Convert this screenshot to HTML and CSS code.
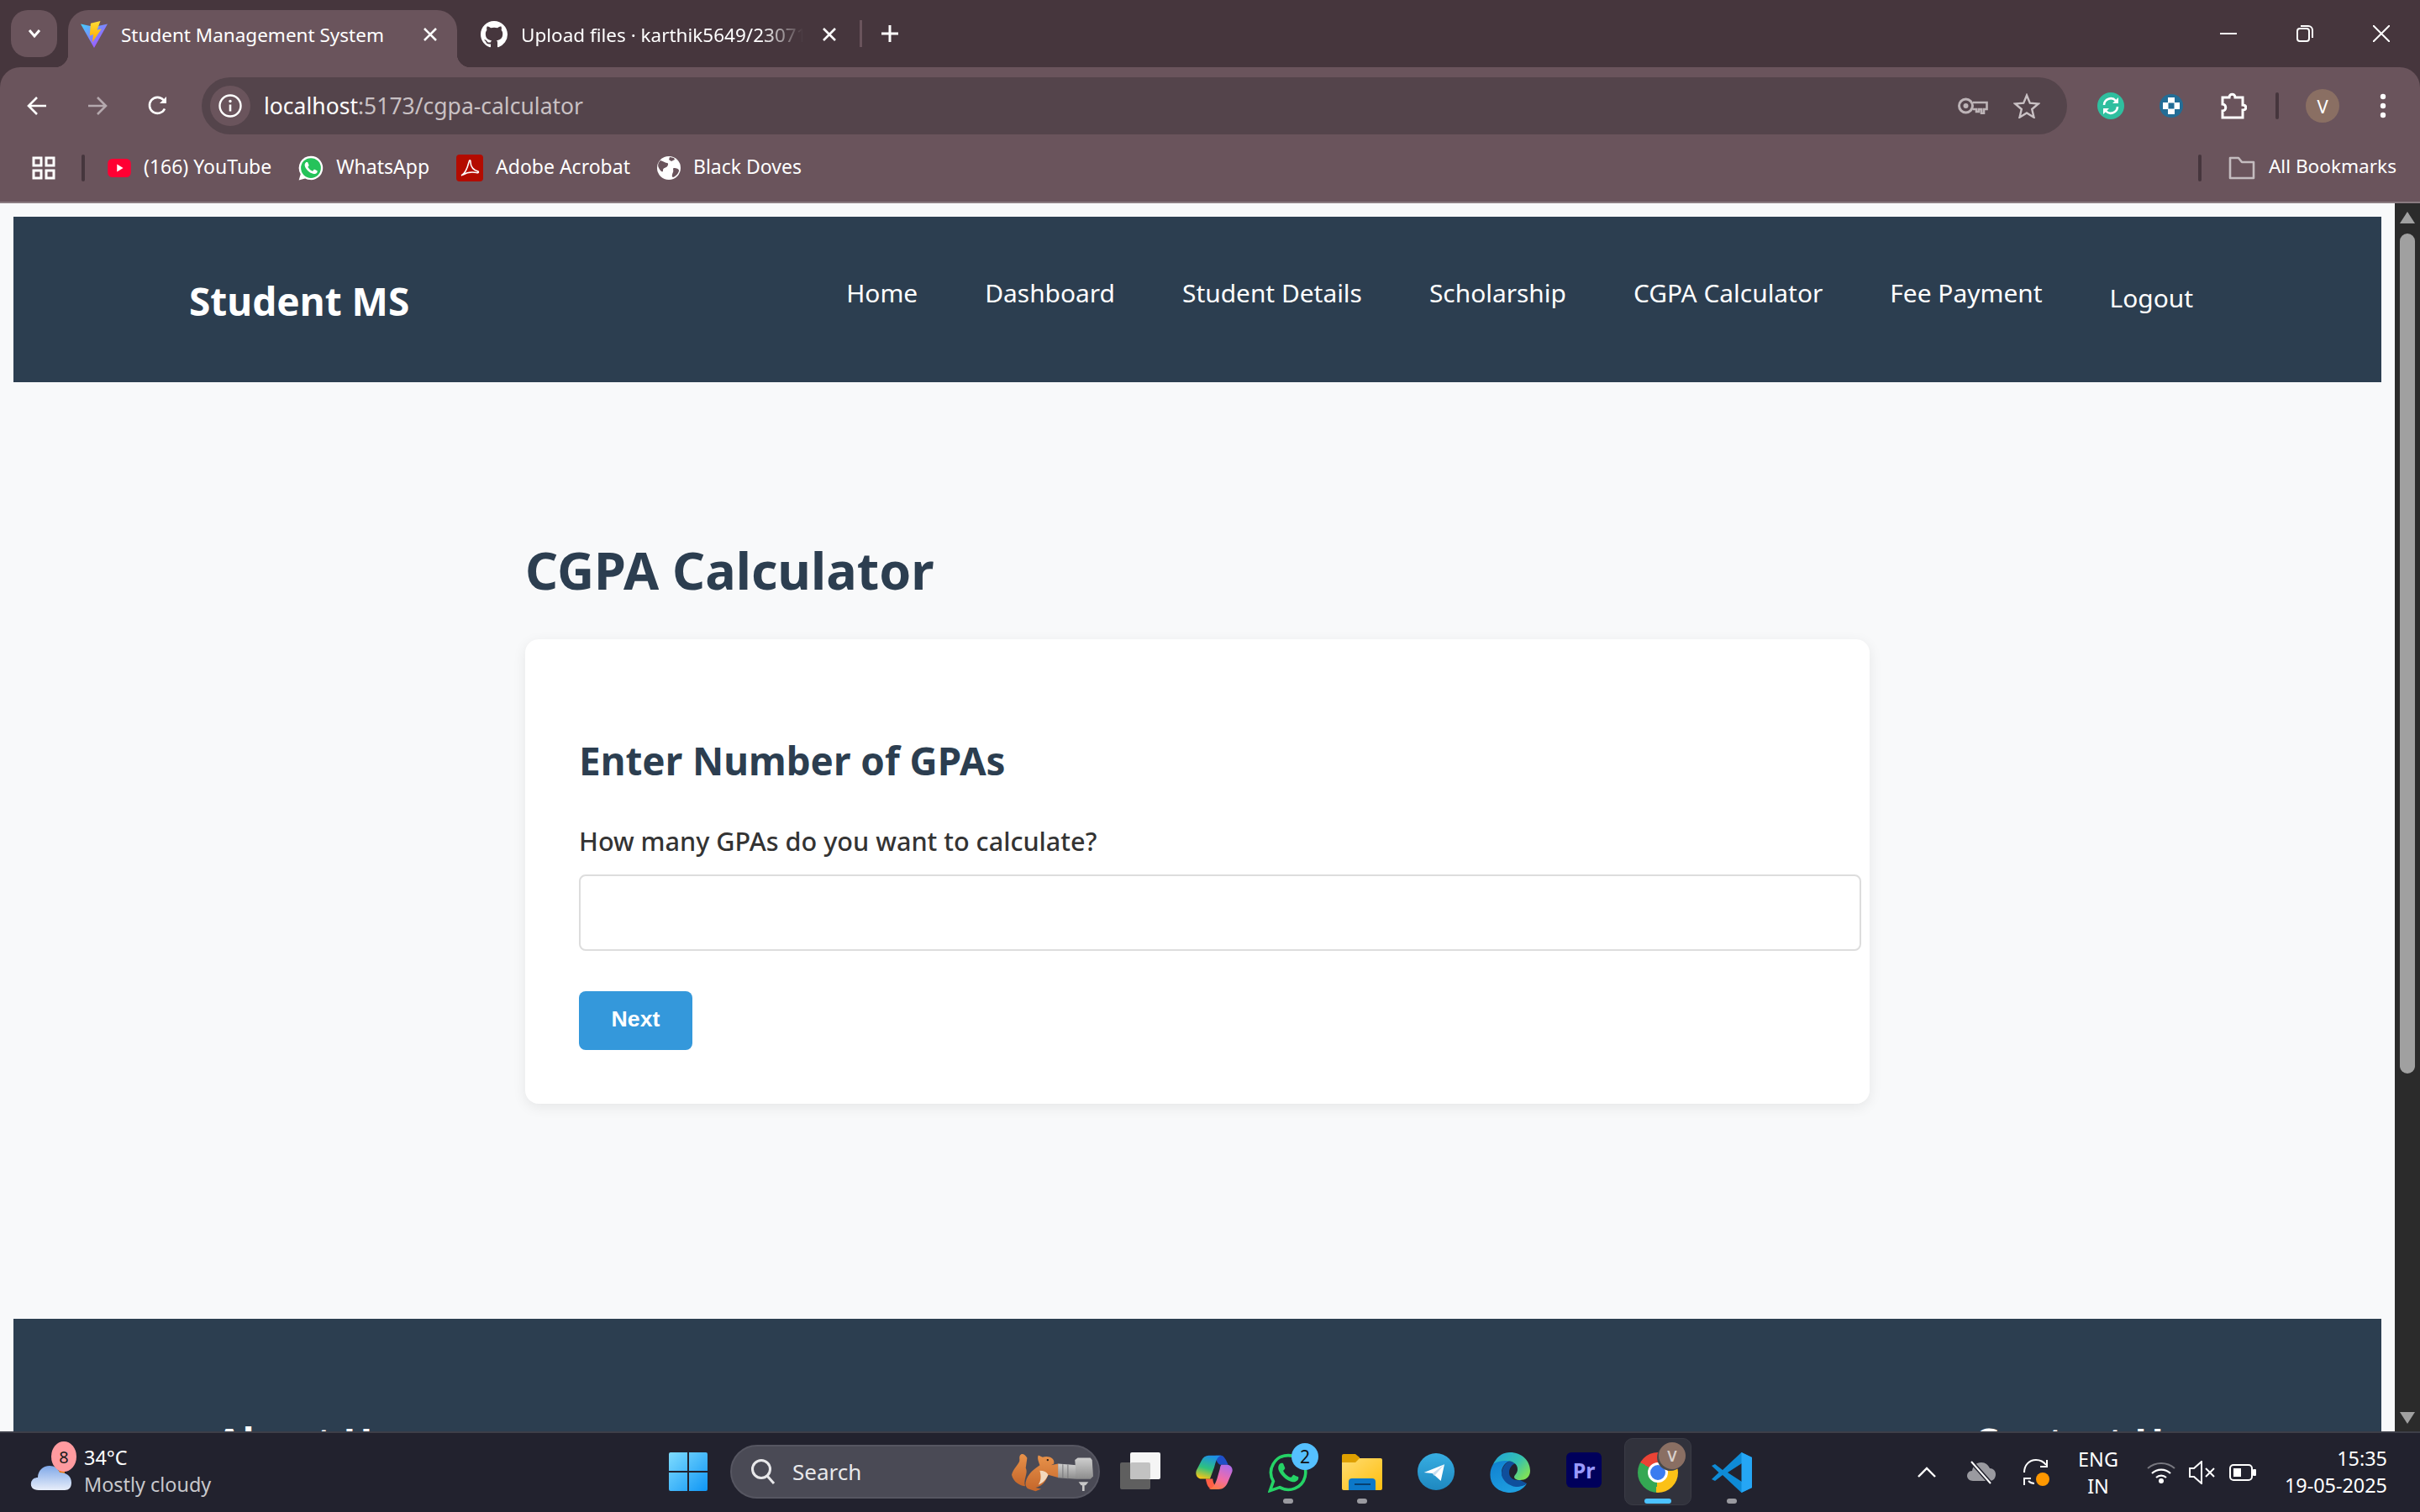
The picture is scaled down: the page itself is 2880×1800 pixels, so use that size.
FILE: index.html
```html
<!DOCTYPE html>
<html lang="en">
<head>
    <meta charset="UTF-8">
    <title>Student Management System</title>
    <link rel="stylesheet" href="styles.css">
</head>
<body>
<div class="screen">

    <!-- browser tabs -->
    <div class="tabstrip">
        <div class="tab-search">
            <svg width="16" height="12" viewBox="0 0 16 12"><path d="M2 2l6 7 6-7" fill="none" stroke="#fff" stroke-width="3"/></svg>
        </div>
        <div class="tab tab-active">
            <svg class="tab-icon" width="32" height="32" viewBox="0 0 32 32">
                <defs>
                    <linearGradient id="vite" x1="0" y1="0" x2="1" y2="1"><stop offset="0" stop-color="#41d1ff"/><stop offset="1" stop-color="#bd34fe"/></linearGradient>
                    <linearGradient id="bolt" x1="0" y1="0" x2="0" y2="1"><stop offset="0" stop-color="#ffdd35"/><stop offset="1" stop-color="#ffa800"/></linearGradient>
                </defs>
                <path d="M0 3.500L16 7l16-3.500L16 32z" fill="url(#vite)"/>
                <path d="M23.500 0L12 2.700 10.700 17.500 15 16l-1 9.300L24.700 9.500l-5.200 1.300z" fill="url(#bolt)"/>
            </svg>
            <span class="tab-title">Student Management System</span>
            <svg class="tab-close" width="18" height="18" viewBox="0 0 18 18"><path d="M2 2l14 14M16 2L2 16" stroke="#fff" stroke-width="2.6"/></svg>
        </div>
        <div class="tab tab-other">
            <svg class="tab-icon" width="32" height="32" viewBox="0 0 16 16"><path fill="#fff" d="M8 0C3.58 0 0 3.58 0 8c0 3.54 2.29 6.53 5.47 7.59.4.07.55-.17.55-.38 0-.19-.01-.82-.01-1.49-2.01.37-2.53-.49-2.69-.94-.09-.23-.48-.94-.82-1.13-.28-.15-.68-.52-.01-.53.63-.01 1.08.58 1.23.82.72 1.21 1.87.87 2.33.66.07-.52.28-.87.51-1.07-1.78-.2-3.64-.89-3.64-3.95 0-.87.31-1.59.82-2.15-.08-.2-.36-1.02.08-2.12 0 0 .67-.21 2.2.82.64-.18 1.32-.27 2-.27.68 0 1.36.09 2 .27 1.53-1.04 2.2-.82 2.2-.82.44 1.1.16 1.92.08 2.12.51.56.82 1.27.82 2.15 0 3.07-1.87 3.75-3.65 3.95.29.25.54.73.54 1.48 0 1.07-.01 1.93-.01 2.2 0 .21.15.46.55.38A8.013 8.013 0 0016 8c0-4.42-3.58-8-8-8z"/></svg>
            <span class="tab-title tab-fade">Upload files · karthik5649/23071</span>
            <svg class="tab-close" width="18" height="18" viewBox="0 0 18 18"><path d="M2 2l14 14M16 2L2 16" stroke="#fff" stroke-width="2.6"/></svg>
        </div>
        <div class="tab-sep"></div>
        <svg class="new-tab" width="22" height="22" viewBox="0 0 22 22"><path d="M11 1v20M1 11h20" stroke="#fff" stroke-width="3"/></svg>
        <div class="win-controls">
            <svg width="20" height="20" viewBox="0 0 20 20"><path d="M0 10h20" stroke="#fff" stroke-width="2"/></svg>
            <svg width="20" height="20" viewBox="0 0 20 20"><rect x="1" y="4" width="14" height="15" rx="3" fill="none" stroke="#fff" stroke-width="2"/><path d="M5 1h9a5 5 0 015 5v9" fill="none" stroke="#fff" stroke-width="2"/></svg>
            <svg width="20" height="20" viewBox="0 0 20 20"><path d="M0 0l20 20M20 0L0 20" stroke="#fff" stroke-width="2"/></svg>
        </div>
    </div>

    <!-- address bar -->
    <div class="toolbar">
        <svg class="nav-btn" width="24" height="24" viewBox="0 0 24 24"><path d="M23 12H3M12 2L2 12l10 10" fill="none" stroke="#fff" stroke-width="2.6"/></svg>
        <svg class="nav-btn" width="24" height="24" viewBox="0 0 24 24"><path d="M1 12h20M12 2l10 10-10 10" fill="none" stroke="#b5a9ae" stroke-width="2.6"/></svg>
        <svg class="nav-btn" width="24" height="24" viewBox="0 0 24 24"><path d="M20 15.5A9.5 9.5 0 1 1 18.5 5L21 7.5" fill="none" stroke="#fff" stroke-width="2.6"/><path d="M22 1v8h-8z" fill="#fff"/></svg>
        <div class="omnibox">
            <div class="site-info">
                <svg width="28" height="28" viewBox="0 0 28 28"><circle cx="14" cy="14" r="12.5" fill="none" stroke="#fff" stroke-width="2.4"/><path d="M14 12.5v8" stroke="#fff" stroke-width="2.6"/><circle cx="14" cy="8.5" r="1.7" fill="#fff"/></svg>
            </div>
            <span class="url">localhost<span class="url-dim">:5173/cgpa-calculator</span></span>
            <svg class="omni-key" width="36" height="20" viewBox="0 0 36 20"><circle cx="9.500" cy="10" r="8" fill="none" stroke="#bdb4b7" stroke-width="3"/><circle cx="9.500" cy="10" r="3" fill="#bdb4b7"/><path d="M18 6h16.500v8H31v5h-3v-5h-3v3h-3v-3h-4" fill="none" stroke="#bdb4b7" stroke-width="2.600"/></svg>
            <svg width="32" height="30" viewBox="0 0 32 30"><path d="M16 2.5l3.8 9.2 10 .8-7.6 6.5 2.3 9.7L16 23.5l-8.500 5.200 2.300-9.700-7.600-6.500 10-.8z" fill="none" stroke="#c9c1c4" stroke-width="2.400"/></svg>
        </div>
        <div class="ext-icons">
            <svg width="32" height="32" viewBox="0 0 32 32"><circle cx="16" cy="16" r="16" fill="#2fbf9f"/><path d="M8 15a8 8 0 0 1 14-5M24 17a8 8 0 0 1-14 5" fill="none" stroke="#fff" stroke-width="2.600"/><path d="M25 6v7h-7zM7 26v-7h7z" fill="#fff"/></svg>
            <svg class="ext-blue" width="28" height="28" viewBox="0 0 28 28"><circle cx="14" cy="14" r="14" fill="#236d96"/><path d="M10 4h8v6h6v8h-6v6h-8v-6H4v-8h6z" fill="#fff"/><rect x="10.500" y="10.500" width="7" height="7" fill="#236d96"/></svg>
            <svg class="ext-puzzle" width="32" height="32" viewBox="0 0 32 32"><path d="M3 6h8c0-5 7-5 7 0h9v9c5 0 5 6 0 6v9H3v-8c5 0 5-8 0-8z" fill="none" stroke="#fff" stroke-width="3"/></svg>
            <div class="toolbar-sep"></div>
            <div class="avatar">V</div>
            <svg class="kebab" width="8" height="30" viewBox="0 0 8 30"><circle cx="4" cy="4" r="3.200" fill="#fff"/><circle cx="4" cy="15" r="3.200" fill="#fff"/><circle cx="4" cy="26" r="3.200" fill="#fff"/></svg>
        </div>
    </div>

    <!-- bookmarks -->
    <div class="bookmarks">
        <svg class="apps" width="28" height="28" viewBox="0 0 28 28"><g fill="none" stroke="#fff" stroke-width="3"><rect x="2" y="2" width="9" height="9"/><rect x="17" y="2" width="9" height="9"/><rect x="2" y="17" width="9" height="9"/><rect x="17" y="17" width="9" height="9"/></g></svg>
        <div class="bm-sep"></div>
        <div class="bm">
            <svg width="28" height="22" viewBox="0 0 30 24"><rect width="30" height="24" rx="6" fill="#ff0033"/><path d="M12 7l8 5-8 5z" fill="#fff"/></svg>
            <span>(166) YouTube</span>
        </div>
        <div class="bm">
            <svg width="30" height="30" viewBox="0 0 24 24"><path d="M12 .5A11.400 11.400 0 0 0 2.200 17.700L.5 23.500l6-1.600A11.400 11.400 0 1 0 12 .5z" fill="#fff"/><circle cx="12" cy="12" r="9.500" fill="#25c35a"/><path fill="#fff" d="M17.500 14.400c-.3-.15-1.750-.86-2-.96-.27-.1-.46-.15-.66.15-.2.3-.76.96-.93 1.150-.17.2-.34.22-.64.07-.3-.15-1.260-.46-2.400-1.480-.89-.79-1.490-1.770-1.660-2.070-.17-.3-.02-.46.13-.6.13-.14.3-.35.45-.52.15-.17.2-.3.3-.5.1-.2.05-.37-.02-.52-.07-.15-.66-1.600-.9-2.200-.24-.57-.49-.5-.67-.5h-.57c-.2 0-.52.07-.79.37-.27.3-1.040 1.020-1.040 2.480s1.060 2.880 1.210 3.070c.15.2 2.100 3.200 5.080 4.490.71.3 1.260.49 1.690.62.71.23 1.360.2 1.870.12.57-.08 1.750-.71 2-1.400.25-.69.25-1.280.17-1.400-.07-.13-.27-.2-.57-.35z"/></svg>
            <span>WhatsApp</span>
        </div>
        <div class="bm">
            <svg width="32" height="32" viewBox="0 0 32 32"><rect width="32" height="32" rx="4" fill="#b30b00"/><path d="M6 25c4-2 7-8 9-16 .5-3 2-3 2 0 0 6 4 10 9 11 1 1 0 2-2 1.500-6-1-12 0-16 2.500" fill="none" stroke="#fff" stroke-width="1.600"/></svg>
            <span>Adobe Acrobat</span>
        </div>
        <div class="bm">
            <svg width="28" height="28" viewBox="0 0 28 28"><circle cx="14" cy="14" r="14" fill="#fff"/><path d="M4 5c4 1 6 3 8 3s1 4-1 5-4 1-4 4-3 1-5-3 0-7 2-9zM20 14c3 0 6 1 6 3s-3 7-7 8c-2 0-1-4 0-6s-1-5 1-5zM15 1l5 1 1 2-4 2-3-2z" fill="#6a545c"/></svg>
            <span>Black Doves</span>
        </div>
        <div class="bm-right">
            <div class="bm-sep"></div>
            <svg class="folder" width="32" height="28" viewBox="0 0 32 28"><path d="M2 2h10l4 5h14v19H2z" fill="none" stroke="#c4bcbf" stroke-width="2.600" stroke-linejoin="round"/></svg>
            <span>All Bookmarks</span>
        </div>
    </div>

    <!-- page area -->
    <div class="viewport">
        <div class="page">
            <nav class="navbar">
                <div class="nav-inner">
                    <div class="logo">Student MS</div>
                    <ul class="nav-links">
                        <li>Home</li>
                        <li>Dashboard</li>
                        <li>Student Details</li>
                        <li>Scholarship</li>
                        <li>CGPA Calculator</li>
                        <li>Fee Payment</li>
                        <li class="logout">Logout</li>
                    </ul>
                </div>
            </nav>

            <main class="content">
                <h1>CGPA Calculator</h1>
                <form class="card">
                    <h2>Enter Number of GPAs</h2>
                    <label for="gpaCount">How many GPAs do you want to calculate?</label>
                    <input type="number" id="gpaCount">
                    <button type="button">Next</button>
                </form>
            </main>

            <footer class="footer">
                <div class="footer-inner">
                    <h3>About Us</h3>
                    <h3>Contact Us</h3>
                </div>
            </footer>
        </div>
        <div class="scrollbar">
            <div class="arrow-up"></div>
            <div class="thumb"></div>
            <div class="arrow-down"></div>
        </div>
    </div>

    <!-- windows taskbar -->
    <div class="taskbar">
        <div class="weather">
            <div class="weather-icon">
                <svg width="50" height="34" viewBox="0 0 50 34">
                    <defs><linearGradient id="cloud" x1="0" y1="0" x2="0" y2="1"><stop offset="0" stop-color="#7fa8e8"/><stop offset="1" stop-color="#e8eefa"/></linearGradient></defs>
                    <path d="M34 2h7v14h-7z" fill="#e8760c"/>
                    <path d="M10 33C3 33 0 29 1 24c1-4 4-6 8-6 0-8 6-14 14-14 6 0 10 3 12 8 8 0 14 4 14 12 0 6-3 9-8 9z" fill="url(#cloud)"/>
                </svg>
                <span class="weather-badge">8</span>
            </div>
            <div class="weather-text">
                <div>34°C</div>
                <div class="weather-desc">Mostly cloudy</div>
            </div>
        </div>

        <div class="task-center">
            <div class="task-slot">
                <svg width="46" height="46" viewBox="0 0 46 46">
                    <defs><linearGradient id="win" x1="0" y1="0" x2="1" y2="1"><stop offset="0" stop-color="#7fdcff"/><stop offset="1" stop-color="#0f96f5"/></linearGradient></defs>
                    <path d="M0 2a2 2 0 0 1 2-2h20v22H0zM24 0h20a2 2 0 0 1 2 2v20H24zM0 24h22v22H2a2 2 0 0 1-2-2zM24 24h22v20a2 2 0 0 1-2 2H24z" fill="url(#win)"/>
                </svg>
            </div>
            <div class="search">
                <svg width="30" height="32" viewBox="0 0 30 32"><circle cx="13" cy="13" r="10.500" fill="none" stroke="#e8e8ea" stroke-width="3"/><path d="M20 21l8 9" stroke="#e8e8ea" stroke-width="3"/></svg>
                <span>Search</span>
                <svg class="squirrel" width="97" height="47" viewBox="40 45 290 140">
                    <defs>
                        <linearGradient id="fur" x1="0" y1="0" x2="0" y2="1"><stop offset="0" stop-color="#e8924a"/><stop offset="1" stop-color="#c4662a"/></linearGradient>
                        <linearGradient id="lens" x1="0" y1="0" x2="0" y2="1"><stop offset="0" stop-color="#cfcfcf"/><stop offset="1" stop-color="#8c8c8c"/></linearGradient>
                    </defs>
                    <path d="M95 65C85 45 65 45 68 70 70 85 45 100 40 125c5 25 30 40 48 40-8-25 12-45 2-65z" fill="url(#fur)"/>
                    <path d="M90 150c5-30 35-50 50-60-5-15-10-25-5-35l15 7c20-7 45 3 40 23l-10 5 25-5 3 50-38-10c-10 25-20 40-45 45l20 5-20 8-25-8c-10-5-12-15-10-25z" fill="url(#fur)"/>
                    <path d="M140 110c15 0 25 5 30 15-10 20-20 30-35 35 10-15 10-30 5-50z" fill="#f3d9bd"/>
                    <circle cx="168" cy="72" r="3.500" fill="#2a1a10"/>
                    <path d="M205 85l65 5v50l-65-5z" fill="url(#lens)"/>
                    <path d="M222 87v49M240 88v50" stroke="#77777a" stroke-width="3"/>
                    <path d="M265 72l10-8h45l6 8 4 58-10 10h-50z" fill="url(#lens)"/>
                    <path d="M278 150h35l-10 12h-4v20h-8v-20h-4z" fill="#c8c8c8"/>
                </svg>
            </div>
            <div class="task-slot">
                <svg width="48" height="44" viewBox="0 0 48 44"><rect x="0" y="12" width="36" height="32" rx="2" fill="#5f5f5f"/><rect x="12" y="0" width="36" height="32" rx="2" fill="#f5f5f5"/><rect x="12" y="12" width="24" height="20" rx="2" fill="#c2c2c2"/></svg>
            </div>
            <div class="task-slot task-copilot">
                <svg width="44" height="41" viewBox="700 50 130 122">
                    <defs>
                        <linearGradient id="cop1" x1="0.600" y1="0" x2="0.300" y2="1"><stop offset="0" stop-color="#1c8ee8"/><stop offset=".55" stop-color="#2ec27e"/><stop offset="1" stop-color="#f5c518"/></linearGradient>
                        <linearGradient id="cop2" x1="0.700" y1="0" x2="0.300" y2="1"><stop offset="0" stop-color="#b06ce8"/><stop offset=".55" stop-color="#f06ca8"/><stop offset="1" stop-color="#ff7a45"/></linearGradient>
                    </defs>
                    <path d="M770 52h20c10 0 18 18 25 33h-25c-10 0-18-10-20-33z" fill="#1f4fc8"/>
                    <path d="M735 135h25c0 15 10 30 20 37h-20c-15 0-22-17-25-37z" fill="#ff5f45"/>
                    <path d="M745 52h45c-15 3-20 23-25 43l-15 40h-30c-15 0-23-15-18-30l18-35c5-12 15-18 25-18z" fill="url(#cop1)"/>
                    <path d="M790 85h20c15 0 23 15 18 27l-16 38c-7 15-17 22-32 22h-35c15-2 23-17 30-37l10-35c1-8 3-13 5-15z" fill="url(#cop2)"/>
                </svg>
            </div>
            <div class="task-slot task-open">
                <svg width="48" height="48" viewBox="0 0 24 24"><path d="M12 1.800A10.200 10.200 0 0 0 3.200 17.200L1.200 22.800l5.800-2A10.200 10.200 0 1 0 12 1.800z" fill="none" stroke="#25d366" stroke-width="1.800"/><path fill="#25d366" d="M17.500 14.400c-.3-.15-1.750-.86-2-.96-.27-.1-.46-.15-.66.15-.2.3-.76.96-.93 1.150-.17.2-.34.22-.64.07-.3-.15-1.260-.46-2.400-1.480-.89-.79-1.490-1.770-1.660-2.070-.17-.3-.02-.46.13-.6.13-.14.3-.35.45-.52.15-.17.2-.3.3-.5.1-.2.05-.37-.02-.52-.07-.15-.66-1.600-.9-2.200-.24-.57-.49-.5-.67-.5h-.57c-.2 0-.52.07-.79.37-.27.3-1.040 1.020-1.040 2.480s1.060 2.880 1.210 3.070c.15.2 2.100 3.200 5.080 4.490.71.3 1.260.49 1.690.62.71.23 1.360.2 1.870.12.57-.08 1.750-.71 2-1.400.25-.69.25-1.280.17-1.400-.07-.13-.27-.2-.57-.35z"/></svg>
                <span class="wa-badge">2</span>
            </div>
            <div class="task-slot task-open">
                <svg class="explorer" width="48" height="43" viewBox="0 0 48 43">
                    <defs><linearGradient id="fold" x1="0" y1="0" x2="1" y2="1"><stop offset="0" stop-color="#ffdc70"/><stop offset="1" stop-color="#ffbf10"/></linearGradient></defs>
                    <path d="M0 2a2 2 0 0 1 2-2h14l5 4v6H0z" fill="#dfa000"/>
                    <path d="M0 10l16 0 5-5h25a2 2 0 0 1 2 2v34a2 2 0 0 1-2 2H2a2 2 0 0 1-2-2z" fill="url(#fold)"/>
                    <path d="M8 43V33a4 4 0 0 1 4-4h24a4 4 0 0 1 4 4v10z" fill="#0c78c8"/>
                    <rect x="15" y="35" width="19" height="2" fill="#063f70"/>
                </svg>
            </div>
            <div class="task-slot">
                <svg class="telegram" width="44" height="44" viewBox="0 0 44 44">
                    <defs><linearGradient id="tg" x1="0" y1="0" x2="0" y2="1"><stop offset="0" stop-color="#37aee2"/><stop offset="1" stop-color="#1e88c0"/></linearGradient></defs>
                    <circle cx="22" cy="22" r="22" fill="url(#tg)"/>
                    <path d="M7.700 23L32 13.300 27.700 33 17.700 24z" fill="#fff"/>
                    <path d="M17.700 24L32 13.300 20 27z" fill="#c8dff0"/>
                </svg>
            </div>
            <div class="task-slot">
                <svg width="48" height="48" viewBox="0 0 48 48">
                    <defs>
                        <linearGradient id="edge1" x1="0" y1="0" x2="1" y2="0.700"><stop offset="0" stop-color="#1fa4dc"/><stop offset=".6" stop-color="#35c1b0"/><stop offset="1" stop-color="#7de05a"/></linearGradient>
                        <linearGradient id="edge2" x1="0" y1="0" x2="0.500" y2="1"><stop offset="0" stop-color="#0f7fd0"/><stop offset="1" stop-color="#1e9ee0"/></linearGradient>
                    </defs>
                    <path d="M4 14C-1 22-1 34 6 41c6 6 14 7 18 7 8 0 16-4 20-11-4 3-11 4-17 2-6-2-13-7-13-15 0-6 4-12 10-14-9-2-16-1-20 4z" fill="url(#edge2)"/>
                    <path d="M24 10c-6 3-10 9-10 16 1 8 9 14 17 15 6 0 11-2 13-4l-8-4c-8 1-13-3-13-9 0-6 4-10 8-11z" fill="#0f4f9c"/>
                    <path d="M4 14C9 4 16 0 24 0c14 0 24 10 24 22 0 8-6 11-12 11-5 0-7-2-7-4 1-3 4-4 4-9 0-7-7-10-13-10-8 0-13 2-16 4z" fill="url(#edge1)"/>
                </svg>
            </div>
            <div class="task-slot">
                <div class="premiere">Pr</div>
            </div>
            <div class="task-slot task-active">
                <div class="chrome-logo"><div class="chrome-core"></div></div>
                <span class="chrome-avatar">V</span>
            </div>
            <div class="task-slot task-open">
                <svg width="48" height="48" viewBox="0 0 48 48">
                    <path fill-rule="evenodd" d="M35.500 0L13 21 4 14l-4 2 8.500 8L0 32l4 2 9-7 22.500 21L48 42V6zM36 13L19 24l17 11z" fill="#0e8bd6"/>
                    <path d="M35.500 0L48 6v36l-12.500 6z" fill="#25a6f5"/>
                </svg>
            </div>
        </div>

        <div class="tray">
            <svg class="tray-chevron" width="24" height="14" viewBox="0 0 24 14"><path d="M2 12l10-10 10 10" fill="none" stroke="#fff" stroke-width="2.400"/></svg>
            <svg class="tray-cloud" width="34" height="28" viewBox="0 0 34 28"><path d="M7 24c-4 0-7-3-7-6s2-6 6-6c1-6 5-10 11-10 5 0 8 3 10 7 4 0 7 3 7 7 0 5-3 8-7 8z" fill="#9a9aa0"/><path d="M6 2l22 25" stroke="#22222e" stroke-width="5"/><path d="M5 1l23 26" stroke="#fff" stroke-width="2"/></svg>
            <svg class="tray-sync" width="34" height="34" viewBox="0 0 34 34"><path d="M2 17C2 8 8 2 16 2c5 0 9 2 12 6M14 30c-3 0-5-1-7-3" fill="none" stroke="#fff" stroke-width="2"/><path d="M29 2v8h-8M2 32v-8h8" fill="none" stroke="#fff" stroke-width="2"/><circle cx="24" cy="25" r="8" fill="#ff9800"/></svg>
            <div class="lang"><div>ENG</div><div>IN</div></div>
            <svg class="tray-wifi" width="34" height="26" viewBox="0 0 34 26"><path d="M1 8a24 24 0 0 1 32 0" fill="none" stroke="#77777f" stroke-width="2"/><path d="M6 14a16 16 0 0 1 22 0M11 19a9 9 0 0 1 12 0" fill="none" stroke="#fff" stroke-width="2.200"/><circle cx="17" cy="23" r="3" fill="#fff"/></svg>
            <svg class="tray-sound" width="32" height="28" viewBox="0 0 32 28"><path d="M1 9h5l9-8v26l-9-8H1z" fill="none" stroke="#fff" stroke-width="2"/><path d="M20 9l10 10M30 9L20 19" stroke="#fff" stroke-width="2"/></svg>
            <svg class="tray-battery" width="32" height="20" viewBox="0 0 32 20"><rect x="1" y="1" width="26" height="18" rx="4" fill="none" stroke="#fff" stroke-width="2"/><rect x="5" y="5" width="9" height="10" fill="#fff"/><rect x="28" y="6" width="4" height="8" rx="1" fill="#fff"/></svg>
            <div class="clock"><div>15:35</div><div>19-05-2025</div></div>
        </div>
    </div>

</div>
</body>
</html>
```

FILE: styles.css
```css
* {
    box-sizing: border-box;
}
html, body {
    margin: 0;
    padding: 0;
}
body {
    font-family: "Noto Sans", "Open Sans", sans-serif;
    background-color: #46363d;
}
.screen {
    width: 2880px;
    height: 1800px;
    display: flex;
    flex-direction: column;
    overflow: hidden;
    color: #fff;
}

/* tabs */
.tabstrip {
    height: 80px;
    flex: none;
    display: flex;
    align-items: flex-start;
    padding-top: 12px;
    padding-left: 13px;
    background-color: #46363d;
}
.tab-search {
    width: 55px;
    height: 56px;
    margin-right: 13px;
    display: flex;
    align-items: center;
    justify-content: center;
    background-color: #6a545c;
    border-radius: 20px;
}
.tab {
    position: relative;
    height: 68px;
    display: flex;
    align-items: center;
    padding-bottom: 10px;
    font-size: 22.500px;
}
.tab-active {
    width: 463px;
    padding-left: 15px;
    background-color: #6a545c;
    border-radius: 24px 24px 0 0;
}
.tab-active::before,
.tab-active::after {
    content: "";
    position: absolute;
    bottom: 0;
    width: 16px;
    height: 16px;
}
.tab-active::before {
    left: -16px;
    background: radial-gradient(circle at 0 0, transparent 16px, #6a545c 16.500px);
}
.tab-active::after {
    right: -16px;
    background: radial-gradient(circle at 100% 0, transparent 16px, #6a545c 16.500px);
}
.tab-other {
    width: 476px;
    padding-left: 28px;
}
.tab-icon {
    flex: none;
    margin-right: 16px;
}
.tab-title {
    flex: 1;
    white-space: nowrap;
    overflow: hidden;
}
.tab-fade {
    -webkit-mask-image: linear-gradient(to right, #000 85%, transparent 100%);
    mask-image: linear-gradient(to right, #000 85%, transparent 100%);
}
.tab-close {
    flex: none;
    margin-left: 38px;
    margin-right: 23px;
}
.tab-other .tab-close {
    margin-left: 22px;
    margin-right: 24px;
}
.tab-sep {
    width: 3px;
    height: 32px;
    margin-top: 12px;
    margin-left: 3px;
    background-color: #6a545c;
}
.new-tab {
    margin-top: 17px;
    margin-left: 22px;
}
.win-controls {
    margin-left: auto;
    padding-top: 18px;
    padding-right: 36px;
    display: flex;
    gap: 71px;
}

/* address bar */
.toolbar {
    height: 88px;
    flex: none;
    display: flex;
    align-items: center;
    padding-left: 32px;
    padding-top: 4px;
    background-color: #6a545c;
    border-radius: 24px 24px 0 0;
}
.nav-btn {
    flex: none;
    margin-right: 48px;
}
.omnibox {
    width: 2220px;
    height: 68px;
    margin-left: -8px;
    display: flex;
    align-items: center;
    padding: 0 32px 0 10px;
    background-color: #54444b;
    border-radius: 34px;
}
.site-info {
    width: 48px;
    height: 48px;
    display: flex;
    align-items: center;
    justify-content: center;
    background-color: #6a545c;
    border-radius: 50%;
    margin-right: 16px;
}
.url {
    flex: 1;
    font-size: 26.500px;
}
.url-dim {
    color: #c9c1c4;
}
.omni-key {
    margin-right: 30px;
}
.ext-icons {
    display: flex;
    align-items: center;
    margin-left: 36px;
}
.ext-blue {
    margin-left: 42px;
}
.ext-puzzle {
    margin-left: 44px;
}
.toolbar-sep {
    width: 4px;
    height: 32px;
    margin-left: 34px;
    background-color: #46363d;
    border-radius: 2px;
}
.avatar {
    width: 40px;
    height: 40px;
    margin-left: 32px;
    display: flex;
    align-items: center;
    justify-content: center;
    background-color: #8a6f63;
    border-radius: 50%;
    font-size: 22px;
}
.kebab {
    margin-left: 48px;
}

/* bookmarks */
.bookmarks {
    height: 74px;
    flex: none;
    display: flex;
    align-items: center;
    padding-left: 38px;
    padding-bottom: 8px;
    background-color: #6a545c;
    border-bottom: 2px solid #8a7a80;
    font-size: 23px;
    white-space: nowrap;
}
.bm-sep {
    width: 4px;
    height: 32px;
    background-color: #46363d;
    border-radius: 2px;
    margin-left: 31px;
    margin-right: 27px;
}
.bm {
    display: flex;
    align-items: center;
    gap: 15px;
    margin-right: 32px;
}
.bm span,
.bm-right span {
    padding-bottom: 5px;
}
.bm-right {
    margin-left: auto;
    padding-right: 28px;
    display: flex;
    align-items: center;
    font-size: 22.600px;
}
.folder {
    margin-left: 5px;
    margin-right: 16px;
}

/* page */
.viewport {
    flex: 1;
    min-height: 0;
    display: flex;
    background-color: #f8f9fa;
}
.page {
    flex: 1;
    min-width: 0;
    padding: 16px 16px 0;
    color: #2c3e50;
}
.navbar {
    height: 197px;
    background-color: #2c3e50;
    color: #fff;
}
.nav-inner {
    width: 2400px;
    height: 100%;
    margin: 0 auto;
    display: flex;
    align-items: center;
    justify-content: space-between;
}
.logo {
    font-size: 46px;
    font-weight: 700;
    padding-top: 2px;
}
.nav-links {
    list-style: none;
    margin: 0 0 10px;
    padding: 0 15px 0 0;
    display: flex;
    align-items: flex-start;
    gap: 80px;
    font-size: 29.900px;
}
.logout {
    margin-top: 6px;
}
.content {
    width: 1600px;
    margin: 0 auto;
    padding-top: 184px;
}
.content h1 {
    margin: 0 0 42px;
    font-size: 61px;
    line-height: 80px;
    font-weight: 700;
}
.card {
    padding: 112px 64px 64px;
    background-color: #fff;
    border-radius: 16px;
    box-shadow: 0 4px 16px rgba(0, 0, 0, 0.08);
}
.card h2 {
    margin: 0 0 42px;
    font-size: 45.800px;
    line-height: 64px;
    font-weight: 700;
}
.card label {
    display: block;
    margin-bottom: 18px;
    color: #333;
    font-size: 30.600px;
    line-height: 44px;
    font-weight: 500;
}
.card input {
    display: block;
    width: calc(100% + 54px);
    height: 91px;
    margin-bottom: 48px;
    padding: 0 24px;
    border: 2px solid #ddd;
    border-radius: 8px;
    background-color: #fff;
}
.card button {
    display: block;
    width: 135px;
    height: 70px;
    padding: 0 0 3px;
    border: none;
    border-radius: 8px;
    background-color: #3498db;
    color: #fff;
    font-family: "Liberation Sans", Arial, sans-serif;
    font-size: 26.670px;
    font-weight: 700;
}
.footer {
    margin-top: 256px;
    height: 400px;
    background-color: #2c3e50;
    color: #fff;
}
.footer-inner {
    width: 2346px;
    margin: 0 auto;
    padding-top: 116px;
    padding-left: 5px;
    display: flex;
    justify-content: space-between;
}
.footer-inner h3 {
    margin: 0;
    font-size: 46px;
    line-height: 60px;
    font-weight: 700;
}
.scrollbar {
    width: 30px;
    flex: none;
    display: flex;
    flex-direction: column;
    align-items: center;
    padding-top: 10px;
    background-color: #2b2b2b;
}
.arrow-up,
.arrow-down {
    width: 0;
    height: 0;
    border-left: 9px solid transparent;
    border-right: 9px solid transparent;
}
.arrow-up {
    border-bottom: 14px solid #a0a0a0;
}
.arrow-down {
    margin-top: auto;
    margin-bottom: 9px;
    border-top: 14px solid #a0a0a0;
}
.thumb {
    width: 18px;
    height: 1000px;
    margin-top: 12px;
    background-color: #a0a0a0;
    border-radius: 9px;
}

/* taskbar */
.taskbar {
    height: 96px;
    flex: none;
    position: relative;
    display: flex;
    background-color: #22222e;
    border-top: 2px solid #3d3e48;
    font-size: 23.400px;
}
.weather {
    width: 775px;
    display: flex;
    padding-left: 36px;
}
.weather-icon {
    position: relative;
    width: 64px;
    padding-top: 35px;
}
.weather-badge {
    position: absolute;
    left: 25px;
    top: 10px;
    width: 30px;
    height: 36px;
    display: flex;
    align-items: center;
    justify-content: center;
    background-color: #ff9ba0;
    border-radius: 50%;
    color: #1a1a1a;
    font-size: 20px;
}
.weather-text {
    padding-top: 13px;
    line-height: 32px;
}
.weather-desc {
    color: #c8c8cc;
}
.task-center {
    display: flex;
    align-items: flex-start;
}
.task-slot {
    position: relative;
    width: 88px;
    height: 94px;
    display: flex;
    align-items: flex-start;
    justify-content: center;
    padding-top: 23px;
}
.task-copilot {
    padding-top: 26px;
}
.explorer {
    margin-top: 2px;
}
.telegram {
    margin-top: 1px;
}
.task-open::after {
    content: "";
    position: absolute;
    left: 38px;
    top: 78px;
    width: 12px;
    height: 6px;
    background-color: #9a9aa0;
    border-radius: 3px;
}
.search {
    width: 440px;
    height: 64px;
    margin: 14px 4px 0 6px;
    display: flex;
    align-items: center;
    padding-left: 22px;
    background-color: #4a4a55;
    border: 2px solid #565661;
    border-radius: 32px;
    color: #e8e8ea;
    font-size: 26px;
}
.search span {
    flex: 1;
    margin-left: 20px;
}
.squirrel {
    margin-right: 6px;
}
.wa-badge {
    position: absolute;
    left: 48px;
    top: 12px;
    width: 32px;
    height: 32px;
    display: flex;
    align-items: center;
    justify-content: center;
    background-color: #55c0ff;
    border-radius: 50%;
    color: #111;
    font-size: 21px;
}
.premiere {
    width: 42px;
    height: 42px;
    display: flex;
    align-items: center;
    justify-content: center;
    background-color: #00005b;
    border-radius: 6px;
    color: #9a9aff;
    font-size: 25px;
    font-weight: 700;
}
.task-active {
    width: 80px;
    height: 80px;
    margin: 6px 4px 0;
    padding-top: 16px;
    background-color: #31323c;
    border: 1px solid #3a3b45;
    border-radius: 10px;
}
.task-active::after {
    content: "";
    position: absolute;
    left: 23px;
    top: 71px;
    width: 32px;
    height: 6px;
    background-color: #4cc2ff;
    border-radius: 3px;
}
.chrome-logo {
    width: 48px;
    height: 48px;
    display: flex;
    align-items: center;
    justify-content: center;
    background: conic-gradient(from 300deg, #ea4335 0 140deg, #fbc116 140deg 245deg, #34a853 245deg 360deg);
    border-radius: 50%;
}
.chrome-core {
    width: 24px;
    height: 24px;
    background-color: #3b7cf0;
    border: 3px solid #fff;
    border-radius: 50%;
}
.chrome-avatar {
    position: absolute;
    left: 40px;
    top: 4px;
    width: 32px;
    height: 32px;
    display: flex;
    align-items: center;
    justify-content: center;
    background-color: #8a6f63;
    border-radius: 50%;
    box-shadow: -2px 2px 0 #4a4a4a;
    color: #d8d0cb;
    font-size: 18px;
    font-weight: 600;
}
.tray {
    flex: 1;
    display: flex;
    align-items: center;
    padding-left: 176px;
    padding-right: 39px;
}
.tray-cloud {
    margin-left: 36px;
}
.tray-sync {
    margin-left: 32px;
}
.lang {
    width: 60px;
    margin-left: 26px;
    text-align: center;
    line-height: 32px;
}
.tray-wifi {
    margin-left: 28px;
}
.tray-sound {
    margin-left: 16px;
}
.tray-battery {
    margin-left: 16px;
}
.clock {
    margin-left: auto;
    padding-bottom: 2px;
    text-align: right;
    line-height: 32px;
}
```
